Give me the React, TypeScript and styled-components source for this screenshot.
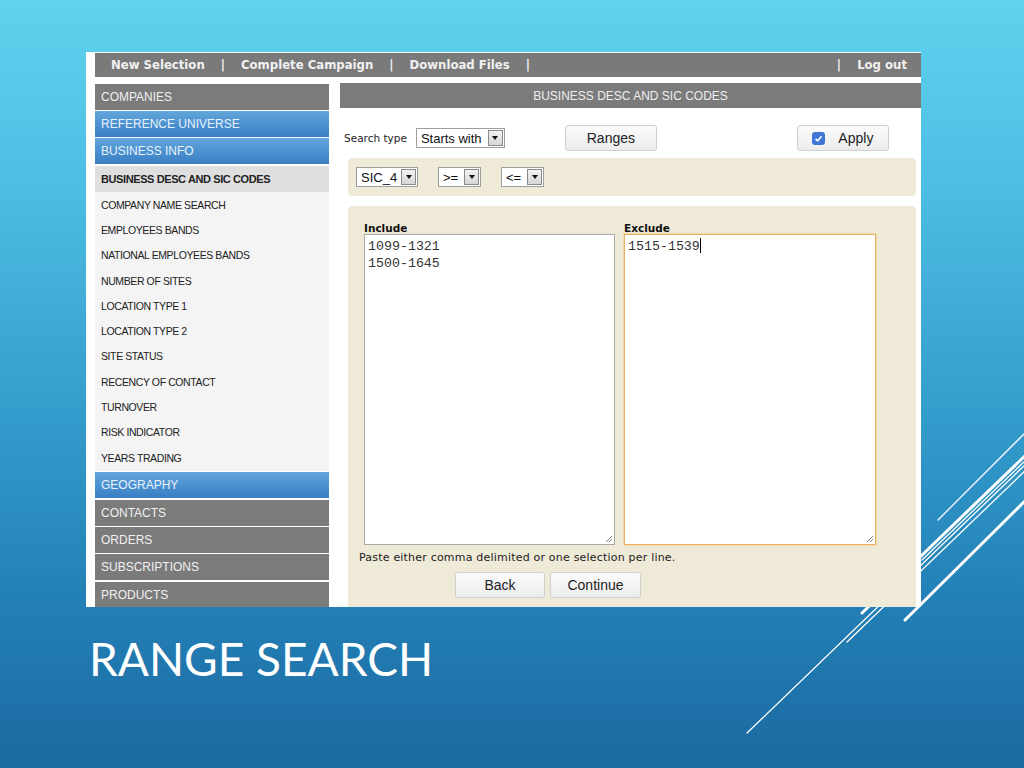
import React from 'react';
import styled, { createGlobalStyle } from 'styled-components';

const GlobalStyle = createGlobalStyle`
  html, body {
    margin: 0;
    padding: 0;
  }
  body {
    width: 1024px;
    height: 768px;
    overflow: hidden;
    font-family: 'Liberation Sans', Arial, sans-serif;
  }
`;

const Slide = styled.div`
  position: relative;
  width: 1024px;
  height: 768px;
  box-sizing: border-box;
  padding: 52px 0 0 86px;
  overflow: hidden;
  background: linear-gradient(
    180deg,
    #60d2ee 0%,
    #4cbde3 25%,
    #339bcb 55%,
    #2380b6 78%,
    #1b6aa1 100%
  );
`;

const Lines = styled.svg`
  position: absolute;
  left: 0;
  top: 0;
  z-index: 0;
`;

const Shot = styled.div`
  position: relative;
  z-index: 1;
  width: 835px;
  height: 555px;
  box-sizing: border-box;
  padding: 1px 0 0 9px;
  background: #fff;
  overflow: hidden;
`;

const TopNav = styled.div`
  display: flex;
  align-items: center;
  gap: 16px;
  height: 24px;
  padding: 0 14px 0 16px;
  background: #7a7a7a;
  color: #f1f1f1;
  font-family: 'DejaVu Sans', Verdana, sans-serif;
  font-weight: bold;
  font-size: 11.7px;
`;

const NavRight = styled.div`
  margin-left: auto;
  display: flex;
  gap: 16px;
`;

const Body = styled.div`
  display: flex;
  gap: 11px;
  margin-top: 6px;
`;

const Sidebar = styled.div`
  width: 234px;
  display: flex;
  flex-direction: column;
  gap: 1px;
  padding-top: 1px;
`;

const NavGroup = styled.div<{ $gap: number }>`
  display: flex;
  flex-direction: column;
  gap: ${(p) => p.$gap}px;
`;

const NavItem = styled.div<{ $blue?: boolean }>`
  height: 26px;
  display: flex;
  align-items: center;
  padding-left: 6px;
  font-size: 12px;
  color: ${(p) => (p.$blue ? '#e8f2fb' : '#f0f0f0')};
  background: ${(p) =>
    p.$blue ? 'linear-gradient(180deg, #62a6da 0%, #4a90d0 55%, #3a7ec2 100%)' : '#7b7b7b'};
`;

const SubList = styled.div`
  background: #f4f4f4;
  margin-top: 1px;
  padding-bottom: 1px;
`;

const SubItem = styled.div<{ $active?: boolean }>`
  height: ${(p) => (p.$active ? '26px' : '25.3px')};
  display: flex;
  align-items: center;
  padding-left: 6px;
  font-size: ${(p) => (p.$active ? '11px' : '10.5px')};
  font-weight: ${(p) => (p.$active ? 'bold' : 'normal')};
  letter-spacing: -0.4px;
  color: #222;
  background: ${(p) => (p.$active ? '#dfdfdf' : 'transparent')};
`;

const Main = styled.div`
  width: 581px;
  display: flex;
  flex-direction: column;
`;

const MainHeader = styled.div`
  height: 25px;
  display: flex;
  align-items: center;
  justify-content: center;
  background: #7b7b7b;
  color: #eee;
  font-size: 12px;
`;

const SearchRow = styled.div`
  display: flex;
  align-items: center;
  height: 26px;
  margin-top: 17px;
  padding-left: 4px;
`;

const SmallLabel = styled.span`
  font-family: 'DejaVu Sans', Verdana, sans-serif;
  font-size: 10.5px;
  color: #222;
  margin-right: 9px;
`;

const Select = styled.div<{ $w: number }>`
  width: ${(p) => p.$w}px;
  height: 20px;
  box-sizing: border-box;
  display: flex;
  align-items: center;
  border: 1px solid #9e9e9e;
  background: #fff;
  font-size: 13px;
  color: #111;
`;

const SelectText = styled.span`
  flex: 1;
  padding-left: 4px;
  white-space: nowrap;
`;

const SelectArrow = styled.span`
  width: 15px;
  height: 16px;
  margin-right: 1px;
  box-sizing: border-box;
  display: flex;
  align-items: center;
  justify-content: center;
  border: 1px solid #8a8a8a;
  background: linear-gradient(180deg, #f2f2f2, #d6d6d6);
  &::after {
    content: '';
    border-left: 3.5px solid transparent;
    border-right: 3.5px solid transparent;
    border-top: 4px solid #111;
  }
`;

const Button = styled.div<{ $w: number; $offset?: number }>`
  width: ${(p) => p.$w}px;
  height: 26px;
  margin-left: ${(p) => p.$offset ?? 0}px;
  box-sizing: border-box;
  display: flex;
  align-items: center;
  justify-content: center;
  gap: 13px;
  border: 1px solid #cfcfcf;
  border-radius: 3px;
  background: linear-gradient(180deg, #fbfbfb 0%, #ececec 100%);
  font-size: 14px;
  color: #222;
`;

const Check = styled.span`
  width: 13px;
  height: 13px;
  border-radius: 3px;
  background: #3f76d8;
  display: flex;
  align-items: center;
  justify-content: center;
`;

const Panel = styled.div`
  margin: 7px 5px 0 8px;
  height: 38px;
  display: flex;
  align-items: center;
  gap: 20px;
  padding-left: 8px;
  border-radius: 4px;
  background: #efead8;
`;

const BigPanel = styled.div`
  margin: 10px 5px 0 8px;
  height: 420px;
  padding: 16px 0 0 16px;
  box-sizing: border-box;
  border-radius: 4px;
  background: #efead8;
`;

const Areas = styled.div`
  display: flex;
  gap: 9px;
`;

const Field = styled.div`
  display: flex;
  flex-direction: column;
`;

const FieldLabel = styled.div`
  font-family: 'DejaVu Sans', Verdana, sans-serif;
  font-weight: bold;
  font-size: 10.5px;
  color: #111;
  height: 12px;
  line-height: 12px;
`;

const TextBox = styled.div<{ $focus?: boolean; $w: number }>`
  position: relative;
  width: ${(p) => p.$w}px;
  height: 311px;
  box-sizing: border-box;
  padding: 3px 3px;
  border: 1px solid ${(p) => (p.$focus ? '#e3b363' : '#a9a9a9')};
  box-shadow: ${(p) => (p.$focus ? '0 0 0 1px #f3d9a8' : 'none')};
  background: #fff;
  font-family: 'Liberation Mono', 'Courier New', monospace;
  font-size: 13.3px;
  line-height: 17px;
  color: #333;
  white-space: pre;
`;

const Caret = styled.span`
  display: inline-block;
  width: 1px;
  height: 15px;
  background: #000;
  vertical-align: -3px;
`;

const Grip = styled.svg`
  position: absolute;
  right: 1px;
  bottom: 1px;
`;

const Hint = styled.div`
  margin: 6px 0 0 -5px;
  font-family: 'DejaVu Sans', Verdana, sans-serif;
  font-size: 11px;
  letter-spacing: 0.2px;
  color: #222;
`;

const ButtonRow = styled.div`
  display: flex;
  gap: 5px;
  margin: 8px 0 0 91px;
`;

const Title = styled.h1`
  margin: 24px 0 0 3px;
  font-family: Lato, 'Open Sans', sans-serif;
  font-weight: 400;
  font-size: 46px;
  line-height: 56px;
  letter-spacing: 0px;
  color: #fff;
`;

const subItems = [
  'COMPANY NAME SEARCH',
  'EMPLOYEES BANDS',
  'NATIONAL EMPLOYEES BANDS',
  'NUMBER OF SITES',
  'LOCATION TYPE 1',
  'LOCATION TYPE 2',
  'SITE STATUS',
  'RECENCY OF CONTACT',
  'TURNOVER',
  'RISK INDICATOR',
  'YEARS TRADING',
];

const lines: [number, number, number, number, number][] = [
  [747, 733, 1030, 460, 1.3],
  [847, 642, 1030, 466, 1.3],
  [862, 613, 1030, 451, 3],
  [905, 620, 1030, 496, 3],
  [938, 520, 1030, 428, 1.3],
  [922, 560, 1030, 456, 1.3],
];

function ResizeGrip() {
  return (
    <Grip width="9" height="9" viewBox="0 0 9 9">
      <path d="M8 2 L2 8 M8 5 L5 8" stroke="#888" strokeWidth="1" />
    </Grip>
  );
}

function Dropdown({ w, label }: { w: number; label: string }) {
  return (
    <Select $w={w}>
      <SelectText>{label}</SelectText>
      <SelectArrow />
    </Select>
  );
}

export default function App() {
  return (
    <>
      <GlobalStyle />
      <Slide>
        <Lines width="1024" height="768">
          {lines.map(([x1, y1, x2, y2, w], i) => (
            <line key={i} x1={x1} y1={y1} x2={x2} y2={y2} stroke="#fff" strokeWidth={w} strokeLinecap="round" />
          ))}
        </Lines>
        <Shot>
          <TopNav>
            <span>New Selection</span>
            <span>|</span>
            <span>Complete Campaign</span>
            <span>|</span>
            <span>Download Files</span>
            <span>|</span>
            <NavRight>
              <span>|</span>
              <span>Log out</span>
            </NavRight>
          </TopNav>
          <Body>
            <Sidebar>
              <NavItem>COMPANIES</NavItem>
              <NavItem $blue>REFERENCE UNIVERSE</NavItem>
              <NavItem $blue>BUSINESS INFO</NavItem>
              <SubList>
                <SubItem $active>BUSINESS DESC AND SIC CODES</SubItem>
                {subItems.map((s) => (
                  <SubItem key={s}>{s}</SubItem>
                ))}
              </SubList>
              <NavGroup $gap={1.4}>
                <NavItem $blue>GEOGRAPHY</NavItem>
                <NavItem>CONTACTS</NavItem>
                <NavItem>ORDERS</NavItem>
                <NavItem>SUBSCRIPTIONS</NavItem>
                <NavItem>PRODUCTS</NavItem>
              </NavGroup>
            </Sidebar>
            <Main>
              <MainHeader>BUSINESS DESC AND SIC CODES</MainHeader>
              <SearchRow>
                <SmallLabel>Search type</SmallLabel>
                <Dropdown w={89} label="Starts with" />
                <Button $w={92} $offset={60}>
                  Ranges
                </Button>
                <Button $w={92} $offset={140}>
                  <Check>
                    <svg width="9" height="9" viewBox="0 0 9 9">
                      <path d="M1.5 4.8 L3.6 6.8 L7.6 2.2" stroke="#fff" strokeWidth="1.6" fill="none" />
                    </svg>
                  </Check>
                  Apply
                </Button>
              </SearchRow>
              <Panel>
                <Dropdown w={62} label="SIC_4" />
                <Dropdown w={43} label=">=" />
                <Dropdown w={43} label="<=" />
              </Panel>
              <BigPanel>
                <Areas>
                  <Field>
                    <FieldLabel>Include</FieldLabel>
                    <TextBox $w={251}>
                      {'1099-1321\n1500-1645'}
                      <ResizeGrip />
                    </TextBox>
                  </Field>
                  <Field>
                    <FieldLabel>Exclude</FieldLabel>
                    <TextBox $w={252} $focus>
                      1515-1539
                      <Caret />
                      <ResizeGrip />
                    </TextBox>
                  </Field>
                </Areas>
                <Hint>Paste either comma delimited or one selection per line.</Hint>
                <ButtonRow>
                  <Button $w={90}>Back</Button>
                  <Button $w={91}>Continue</Button>
                </ButtonRow>
              </BigPanel>
            </Main>
          </Body>
        </Shot>
        <Title>RANGE SEARCH</Title>
      </Slide>
    </>
  );
}
